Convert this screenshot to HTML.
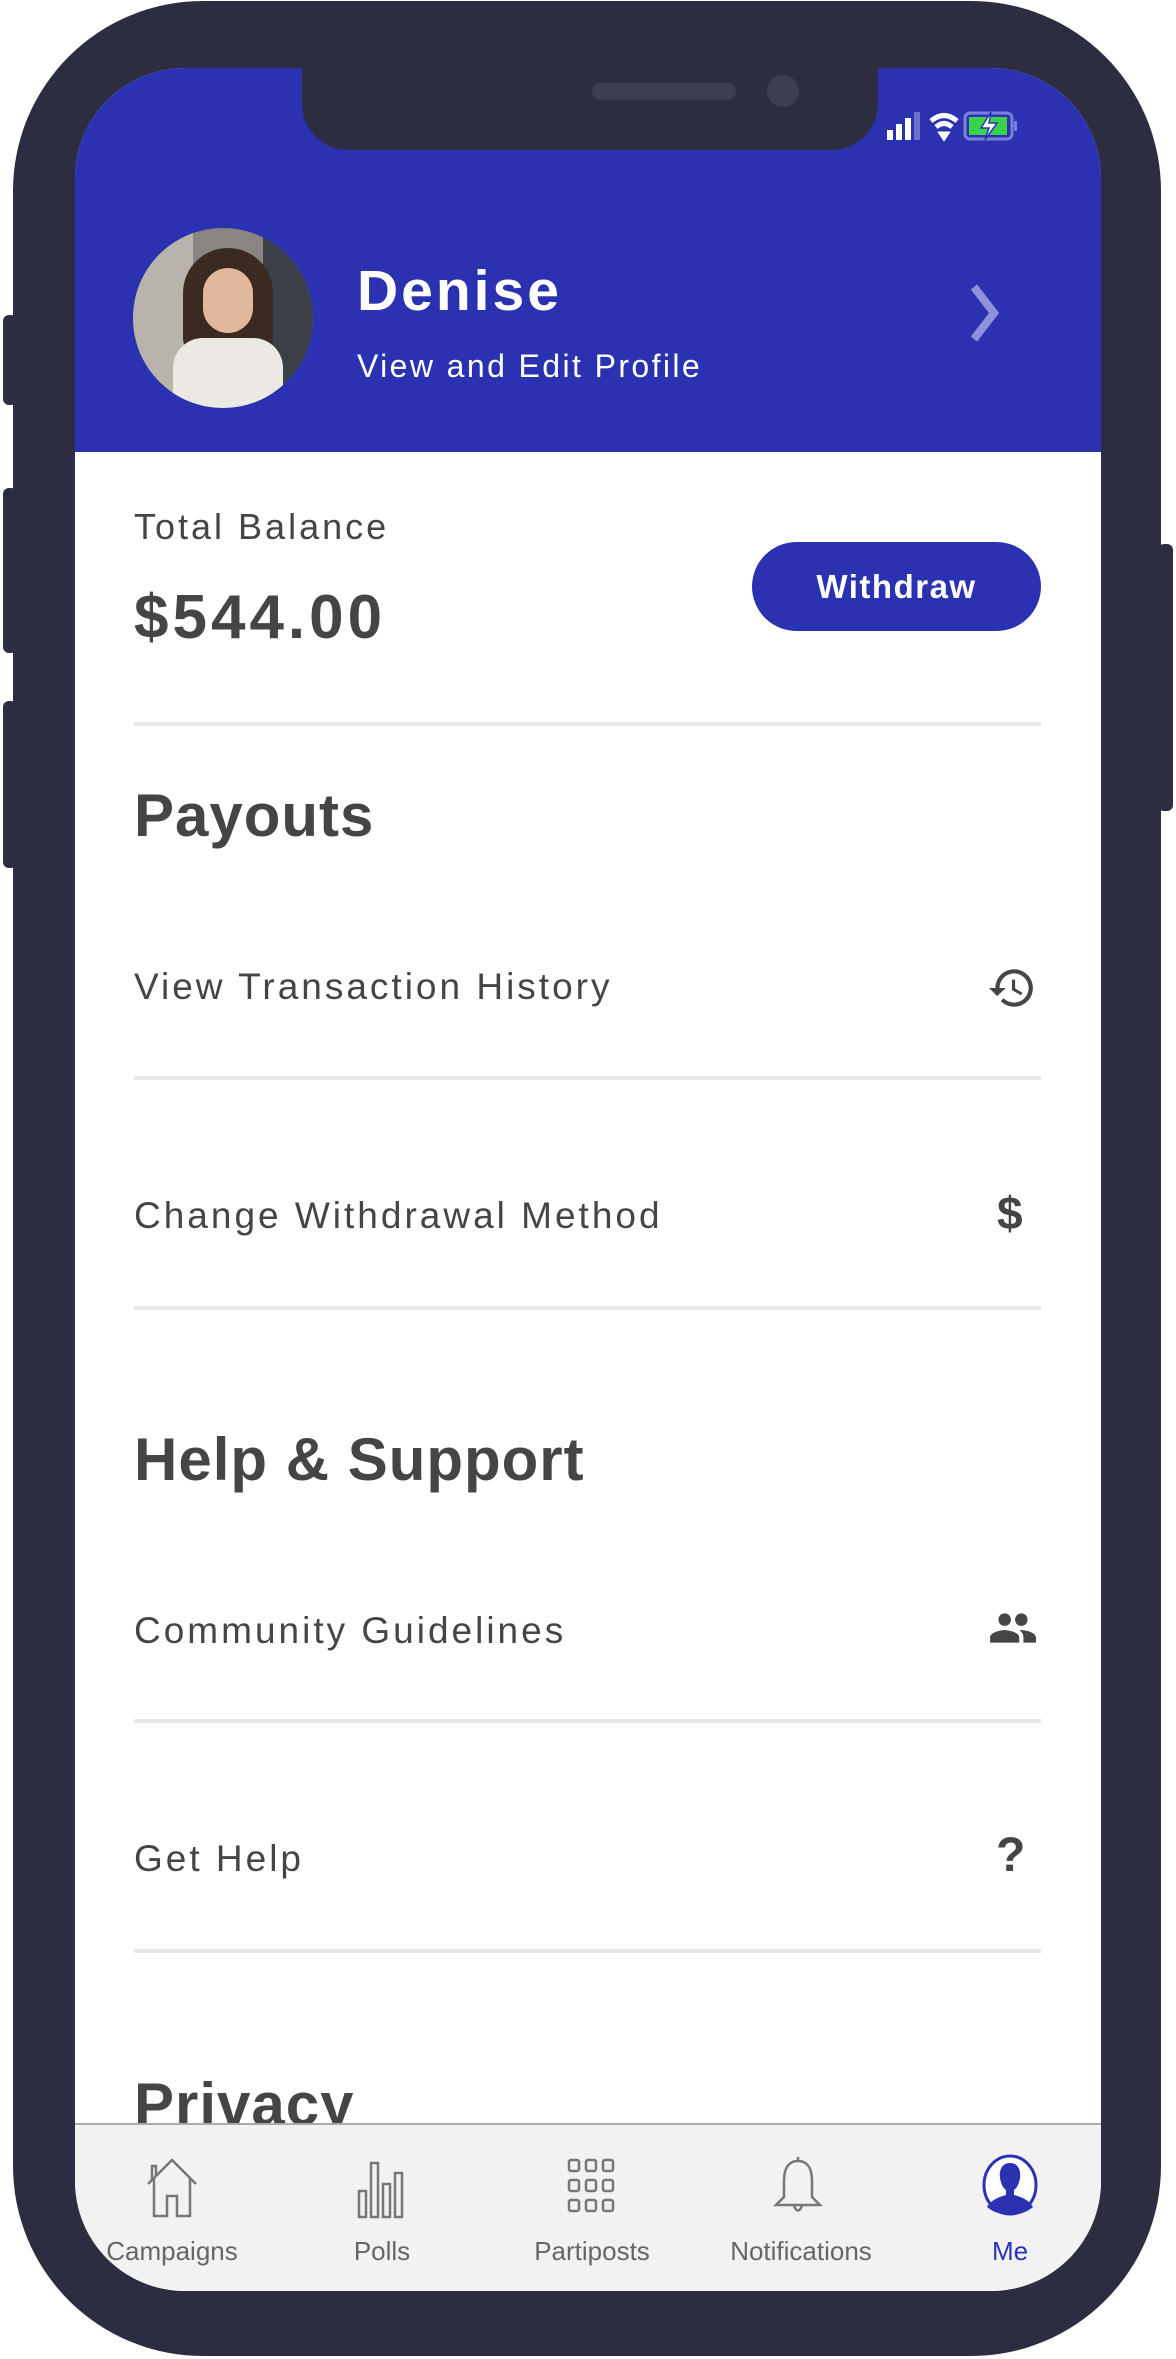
<!DOCTYPE html>
<html><head><meta charset="utf-8"><style>
*{margin:0;padding:0;box-sizing:border-box}
body{width:1176px;height:2359px;background:#fff;position:relative;overflow:hidden;font-family:"Liberation Sans",sans-serif;color:#454545}
.abs{position:absolute}
.phone{left:13px;top:1px;width:1148px;height:2355px;background:#2d2d42;border-radius:190px}
.btn{background:#2d2d42;border-radius:6px}
.screen{left:75px;top:68px;width:1026px;height:2223px;background:#fff;border-radius:110px;overflow:hidden}
.blue{left:0;top:0;width:1032px;height:384px;background:#2b32b2}
.notch{left:227px;top:-5px;width:576px;height:87px;background:#2d2d42;border-radius:0 0 46px 46px}
.t{position:absolute;white-space:nowrap}
.div{position:absolute;left:59px;width:907px;height:4px;background:#e8e8e8}
.row{font-size:37px;left:59px;letter-spacing:3px}
.h{font-size:60px;font-weight:bold;left:59px;letter-spacing:1px}
</style></head><body>
<div class="abs btn" style="left:3px;top:315px;width:14px;height:90px"></div>
<div class="abs btn" style="left:3px;top:488px;width:14px;height:165px"></div>
<div class="abs btn" style="left:3px;top:701px;width:14px;height:167px"></div>
<div class="abs btn" style="left:1158px;top:544px;width:15px;height:267px"></div>
<div class="abs phone"></div>
<div class="abs screen">
 <div class="abs blue"></div>
 <div class="abs notch">
  <div class="abs" style="left:290px;top:20px;width:144px;height:17px;border-radius:9px;background:#3e3e52"></div>
  <div class="abs" style="left:465px;top:12px;width:32px;height:32px;border-radius:50%;background:#3e3e52"></div>
 </div>
 <svg class="abs" style="left:808px;top:40px" width="150" height="44" viewBox="0 0 150 44">
  <rect x="4" y="22" width="6" height="10" fill="#fff"/><rect x="13" y="16" width="6" height="16" fill="#fff"/><rect x="22" y="10" width="6" height="22" fill="#fff"/><rect x="31" y="4" width="6" height="28" fill="#6a70cc"/>
  <path d="M48 13 Q61 2 74 13" stroke="#fff" stroke-width="5" fill="none"/><path d="M53 19 Q61 12 69 19" stroke="#fff" stroke-width="5" fill="none"/><path d="M57 25 L61 31 L65 25 Z" fill="#fff" stroke="#fff" stroke-width="3"/>
  <rect x="82" y="5" width="47" height="26" rx="5" fill="none" stroke="#7b80d8" stroke-width="3"/><rect x="86" y="9" width="38" height="18" fill="#3ad24a"/><rect x="131" y="13" width="3" height="10" fill="#7b80d8"/>
  <path d="M108 4 L98 20 L106 20 L102 32 L114 15 L106 15 Z" fill="#fff" stroke="#2b32b2" stroke-width="1.5"/>
 </svg>
 <div class="abs" style="left:58px;top:160px;width:180px;height:180px;border-radius:50%;overflow:hidden;background:#8a8580">
  <div class="abs" style="left:0;top:0;width:60px;height:180px;background:#b9b4ab"></div>
  <div class="abs" style="left:130px;top:0;width:50px;height:180px;background:#3a3f48"></div>
  <div class="abs" style="left:50px;top:20px;width:90px;height:110px;border-radius:45px 45px 20px 20px;background:#3b2a22"></div>
  <div class="abs" style="left:70px;top:40px;width:50px;height:65px;border-radius:25px;background:#e2b89c"></div>
  <div class="abs" style="left:40px;top:110px;width:110px;height:70px;border-radius:30px 30px 0 0;background:#ece9e4"></div>
 </div>
 <div class="t" style="left:282px;top:190px;font-size:57px;font-weight:bold;color:#fff;letter-spacing:3px">Denise</div>
 <div class="t" style="left:282px;top:280px;font-size:32px;color:#fff;letter-spacing:2.4px">View and Edit Profile</div>
 <svg class="abs" style="left:895px;top:215px" width="30" height="60"><path d="M4 4 L24 30 L4 56" stroke="#8e92dc" stroke-width="8" fill="none"/></svg>

 <div class="t" style="left:59px;top:438px;font-size:36px;letter-spacing:3px">Total Balance</div>
 <div class="t" style="left:59px;top:514px;font-size:62px;font-weight:bold;letter-spacing:4px">$544.00</div>
 <div class="abs" style="left:677px;top:474px;width:289px;height:89px;border-radius:45px;background:#2b32b2;color:#fff;font-size:33px;font-weight:bold;text-align:center;line-height:89px;letter-spacing:1.5px">Withdraw</div>
 <div class="div" style="top:654px"></div>

 <div class="t h" style="top:713px">Payouts</div>
 <div class="t row" style="top:898px">View Transaction History</div>
 <svg class="abs" style="left:912px;top:895px" width="50" height="50" viewBox="0 0 24 24"><path d="M13 3a9 9 0 0 0-9 9H1l3.9 3.9L9 12H6a7 7 0 1 1 2 4.9l-1.4 1.4A9 9 0 1 0 13 3zm-1 5v5l4.3 2.5.7-1.2-3.5-2.1V8z" fill="#454545"/></svg>
 <div class="div" style="top:1008px"></div>
 <div class="t row" style="top:1127px">Change Withdrawal Method</div>
 <div class="t" style="left:922px;top:1118px;font-size:46px;font-weight:bold">$</div>
 <div class="div" style="top:1238px"></div>

 <div class="t h" style="top:1357px">Help &amp; Support</div>
 <div class="t row" style="top:1542px">Community Guidelines</div>
 <svg class="abs" style="left:910px;top:1535px" width="56" height="50" viewBox="0 0 24 24"><path d="M16 11c1.7 0 3-1.3 3-3s-1.3-3-3-3-3 1.3-3 3 1.3 3 3 3zm-8 0c1.7 0 3-1.3 3-3S9.7 5 8 5 5 6.3 5 8s1.3 3 3 3zm0 2c-2.3 0-7 1.2-7 3.5V19h14v-2.5C15 14.2 10.3 13 8 13zm8 0c-.3 0-.6 0-1 .1 1.2.8 2 1.9 2 3.4V19h6v-2.5c0-2.3-4.7-3.5-7-3.5z" fill="#454545"/></svg>
 <div class="div" style="top:1651px"></div>
 <div class="t row" style="top:1770px">Get Help</div>
 <div class="t" style="left:921px;top:1760px;font-size:48px;font-weight:bold">?</div>
 <div class="div" style="top:1881px"></div>
 <div class="t h" style="top:2002px">Privacy</div>

 <div class="abs" style="left:0;top:2055px;width:1032px;height:170px;background:#f2f2f2;border-top:2px solid #aaa"></div>
 <svg class="abs" style="left:67px;top:2088px" width="60" height="65" viewBox="0 0 60 65"><path d="M6 28 L30 4 L54 28 M12 22 V60 H25 V40 H35 V60 H48 V22 M10 24 V10 H14 V20" stroke="#777" stroke-width="2.5" fill="none"/></svg>
 <svg class="abs" style="left:282px;top:2088px" width="50" height="65" viewBox="0 0 50 65"><path d="M2 35h7v26H2zM14 7h7v54h-7zM26 28h7v33h-7zM38 17h7v44h-7z" stroke="#777" stroke-width="2.5" fill="none"/></svg>
 <svg class="abs" style="left:492px;top:2088px" width="50" height="65" viewBox="0 0 50 65">
 <g stroke="#777" stroke-width="2.5" fill="#f2f2f2"><rect x="2" y="4" width="10" height="11" rx="2"/><rect x="19" y="4" width="10" height="11" rx="2"/><rect x="36" y="4" width="10" height="11" rx="2"/><rect x="2" y="24" width="10" height="11" rx="2"/><rect x="19" y="24" width="10" height="11" rx="2"/><rect x="36" y="24" width="10" height="11" rx="2"/><rect x="2" y="44" width="10" height="11" rx="2"/><rect x="19" y="44" width="10" height="11" rx="2"/><rect x="36" y="44" width="10" height="11" rx="2"/></g></svg>
 <svg class="abs" style="left:696px;top:2085px" width="54" height="70" viewBox="0 0 54 70"><path d="M27 4 V8 M27 8 C16 8 13 18 13 28 V44 L5 52 H49 L41 44 V28 C41 18 38 8 27 8 Z M23 53 Q27 62 31 53" stroke="#777" stroke-width="2.5" fill="none"/></svg>
 <svg class="abs" style="left:905px;top:2085px" width="60" height="64" viewBox="0 0 60 64"><ellipse cx="30" cy="32" rx="26" ry="29" fill="#fff" stroke="#2b32b2" stroke-width="3"/><path d="M30 10c-8 0-11 7-10 15 1 6 3 10 6 12v5c-8 2-16 6-19 12 6 5 14 8 23 8s17-3 23-8c-3-6-11-10-19-12v-5c3-2 5-6 6-12 1-8-2-15-10-15z" fill="#2b32b2"/></svg>
 <div class="t" style="left:97px;top:2168px;font-size:26px;color:#666"><span style="position:absolute;transform:translateX(-50%)">Campaigns</span></div>
 <div class="t" style="left:307px;top:2168px;font-size:26px;color:#666"><span style="position:absolute;transform:translateX(-50%)">Polls</span></div>
 <div class="t" style="left:517px;top:2168px;font-size:26px;color:#666"><span style="position:absolute;transform:translateX(-50%)">Partiposts</span></div>
 <div class="t" style="left:726px;top:2168px;font-size:26px;color:#666"><span style="position:absolute;transform:translateX(-50%)">Notifications</span></div>
 <div class="t" style="left:935px;top:2168px;font-size:26px;color:#2b32b2"><span style="position:absolute;transform:translateX(-50%)">Me</span></div>
</div>
</body></html>
